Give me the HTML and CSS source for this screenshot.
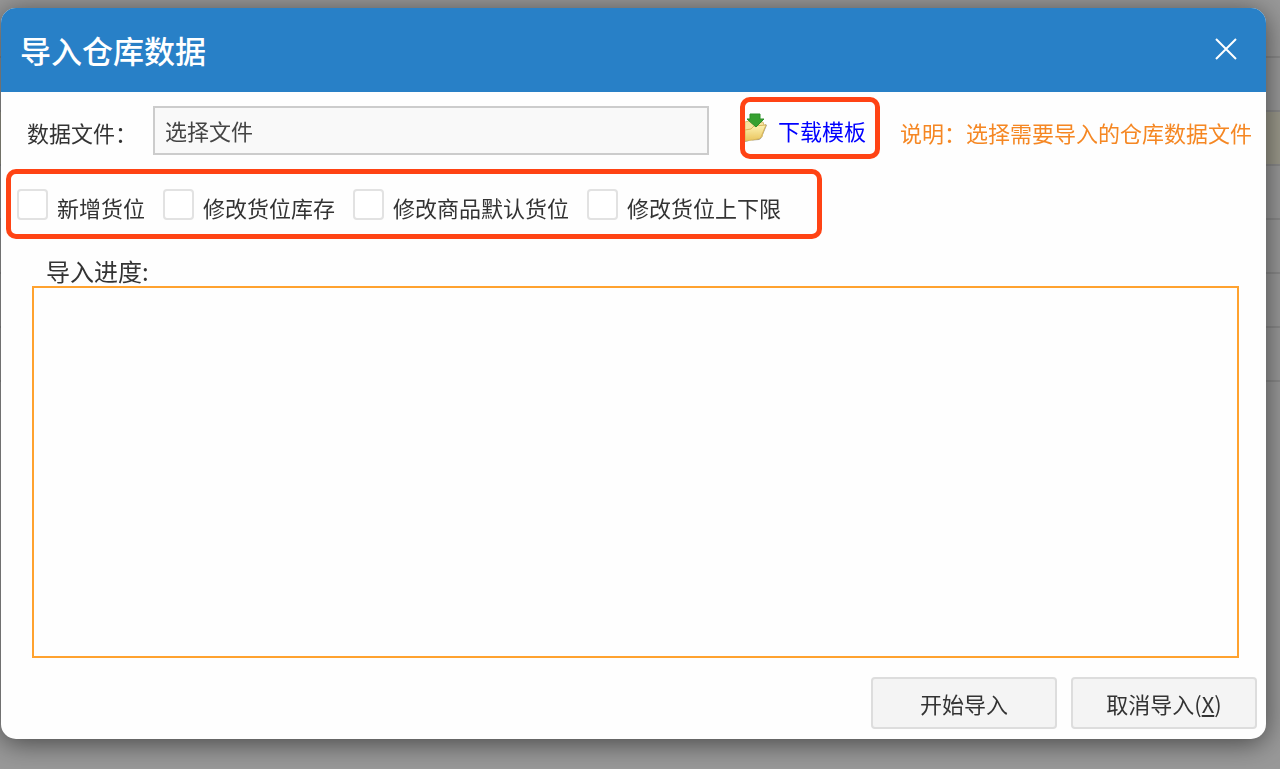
FILE: index.html
```html
<!DOCTYPE html>
<html lang="zh-CN">
<head>
    <meta charset="UTF-8">
    <meta name="viewport" content="width=device-width, initial-scale=1.0">
    <title>导入仓库数据</title>
    <link rel="stylesheet" href="styles.css">
</head>
<body>
    <!-- dimmed list page behind the dialog -->
    <div class="backdrop">
        <div class="backdrop-row"></div>
        <div class="backdrop-row"></div>
        <div class="backdrop-row selected"></div>
        <div class="backdrop-row"></div>
        <div class="backdrop-row"></div>
        <div class="backdrop-row"></div>
        <div class="backdrop-row"></div>
    </div>

    <div class="dialog" role="dialog" aria-labelledby="dialogTitle">
        <div class="dialog-header">
            <h1 id="dialogTitle">导入仓库数据</h1>
            <button type="button" class="close-button" aria-label="关闭">
                <svg width="24" height="24" viewBox="0 0 24 24" fill="none" stroke="#fff" stroke-width="2">
                    <path d="M2 1L22 21M22 1L2 21"/>
                </svg>
            </button>
        </div>

        <form class="dialog-body">
            <div class="file-row">
                <label class="file-label" for="dataFile">数据文件：</label>
                <input type="text" id="dataFile" class="file-input" value="选择文件" readonly>
                <a href="#" class="download-link highlight">
                    <svg width="23" height="30" viewBox="0 0 23 30">
                        <defs>
                            <linearGradient id="folder" x1="0" y1="0" x2="0" y2="1">
                                <stop offset="0" stop-color="#fdf3b4"/>
                                <stop offset="1" stop-color="#e9c45c"/>
                            </linearGradient>
                        </defs>
                        <path d="M0 28L14 27Q16 26 17 24L22 12L20 11L15 25L0 29Z" fill="#77756a" opacity=".7"/>
                        <path d="M0 9L4 8L7 11L18 9L19 12L17 24L0 27Z" fill="#f6e4a0" stroke="#d9bf74"/>
                        <path d="M0 17L6 16L9 13L21 12L16 24Q15 26 13 26L0 28Z" fill="url(#folder)" stroke="#d8b75c"/>
                        <path d="M5 1H15V6H19L11 14L2 6H5Z" fill="#36a030" stroke="#2b8f28"/>
                    </svg>
                    <span>下载模板</span>
                </a>
                <span class="note">说明：选择需要导入的仓库数据文件</span>
            </div>

            <div class="options highlight">
                <label class="option"><input type="checkbox">新增货位</label>
                <label class="option"><input type="checkbox">修改货位库存</label>
                <label class="option"><input type="checkbox">修改商品默认货位</label>
                <label class="option"><input type="checkbox">修改货位上下限</label>
            </div>

            <div class="progress">
                <label class="progress-label" for="progressLog">导入进度:</label>
                <textarea id="progressLog" class="progress-log" readonly></textarea>
            </div>

            <div class="actions">
                <button type="button" class="action-button">开始导入</button>
                <button type="button" class="action-button" accesskey="x">取消导入(<u>X</u>)</button>
            </div>
        </form>
    </div>
</body>
</html>
```

FILE: styles.css
```css
* {
    box-sizing: border-box;
}
body {
    display: flex;
    min-height: 100vh;
    margin: 0;
    padding: 8px 14px 30px 1px;
    background: #999;
    color: #333;
    font-family: "Noto Sans CJK SC", sans-serif;
    font-size: 22px;
    line-height: 30px;
}
input,
textarea,
button {
    font: inherit;
    color: inherit;
}
.backdrop {
    position: fixed;
    inset: 0;
    padding-top: 4px;
}
.backdrop-row {
    height: 54px;
    border-bottom: 2px solid #8a8a8a;
}
.backdrop-row.selected {
    background: #9b998b;
}

/* dialog */
.dialog {
    position: relative;
    display: flex;
    flex: 1;
    flex-direction: column;
    min-width: 0;
    overflow: hidden;
    background: #fefefe;
    border-radius: 15px;
    box-shadow: 0 4px 28px rgba(0, 0, 0, 0.55);
}
.dialog-header {
    display: flex;
    align-items: center;
    justify-content: space-between;
    height: 84px;
    padding: 0 28px 0 19px;
    background: #2880c7;
    color: #fff;
}
.dialog-header h1 {
    margin: 0;
    font-size: 31px;
    font-weight: 500;
}
.close-button {
    display: flex;
    padding: 0;
    border: none;
    background: none;
    cursor: pointer;
}
.dialog-body {
    display: flex;
    flex: 1;
    flex-direction: column;
    padding: 5px 9px 10px 5px;
}
.highlight {
    border: 5px solid #ff4314;
    border-radius: 10px;
}

/* file row */
.file-row {
    display: flex;
    align-items: center;
    white-space: nowrap;
}
.file-label {
    width: 147px;
    padding: 7px 0 0 21px;
}
.file-input {
    flex: 1;
    min-width: 0;
    height: 49px;
    margin: 4px 31px 0 0;
    padding: 0 10px;
    border: 2px solid #ccc;
    background: #f9f9f9;
    color: #444;
    outline: none;
}
.download-link {
    display: flex;
    gap: 10px;
    align-items: center;
    height: 62px;
    padding-right: 9px;
    color: #00f;
    text-decoration: none;
}
.download-link span {
    padding-top: 3px;
}
.note {
    padding: 7px 5px 0 20px;
    color: #f58723;
}

/* options */
.options {
    display: flex;
    gap: 18px;
    align-self: flex-start;
    height: 70px;
    margin-top: 10px;
    padding: 15px 36px 0 6px;
}
.option {
    display: flex;
    gap: 9px;
    align-items: flex-start;
    line-height: 36px;
}
.option input {
    appearance: none;
    width: 31px;
    height: 31px;
    margin: 0;
    border: 2px solid #e2e2e2;
    border-radius: 4px;
    background: #fff;
}
.option input:checked {
    background: #2880c7;
}

/* progress */
.progress {
    display: flex;
    flex: 1;
    flex-direction: column;
    margin: 17px 18px 19px 26px;
}
.progress-label {
    padding-left: 14px;
    font-size: 24px;
}
.progress-log {
    flex: 1;
    border: 2px solid #ffa22f;
    background: #fefefe;
    resize: none;
    outline: none;
}

/* buttons */
.actions {
    display: flex;
    gap: 14px;
    justify-content: flex-end;
}
.action-button {
    width: 186px;
    height: 52px;
    padding: 0;
    border: 2px solid #ddd;
    border-radius: 4px;
    background: #f4f4f4;
    cursor: pointer;
}
```
